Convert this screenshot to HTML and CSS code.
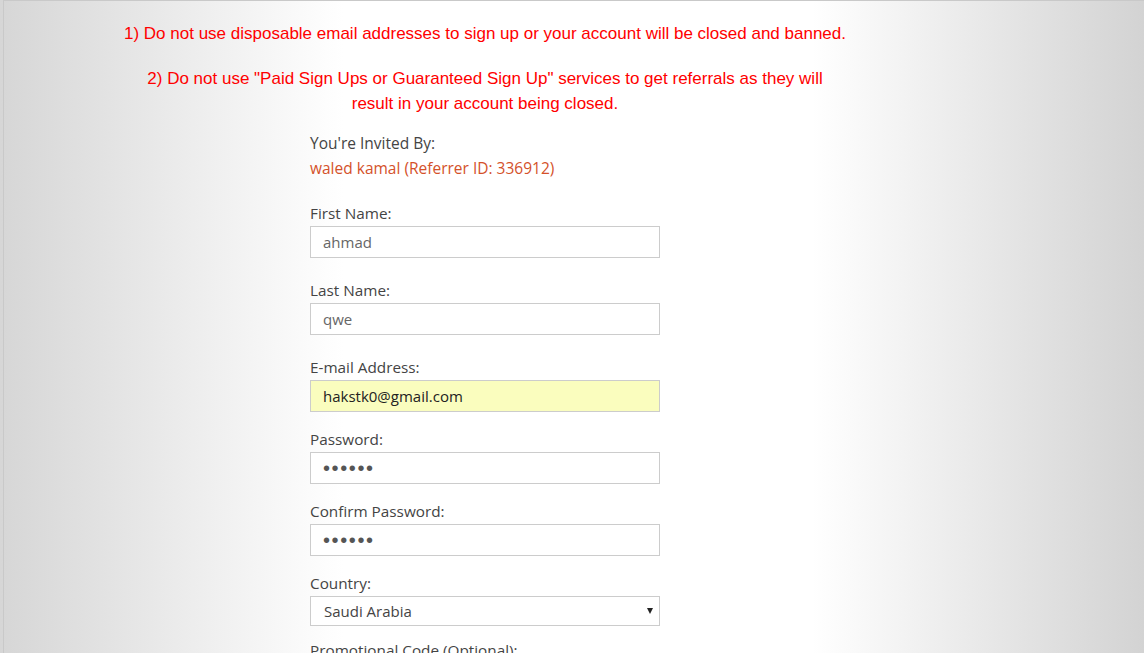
FILE: index.html
```html
<!DOCTYPE html>
<html lang="en">
<head>
<meta charset="utf-8">
<title>Sign Up</title>
<link rel="stylesheet" href="styles.css">
</head>
<body>
<div class="page">
  <div class="notices">
    <p class="notice notice-wide">1) Do not use disposable email addresses to sign up or your account will be closed and banned.</p>
    <p class="notice notice-narrow">2) Do not use "Paid Sign Ups or Guaranteed Sign Up" services to get referrals as they will result in your account being closed.</p>
  </div>
  <form class="signup">
    <div class="invited">
      <div class="invited-label">You're Invited By:</div>
      <div class="referrer">waled kamal (Referrer ID: 336912)</div>
    </div>
    <div class="field field-lg">
      <label class="label" for="fn">First Name:</label>
      <input class="input" id="fn" type="text" value="ahmad">
    </div>
    <div class="field field-lg">
      <label class="label" for="ln">Last Name:</label>
      <input class="input" id="ln" type="text" value="qwe">
    </div>
    <div class="field field-lg">
      <label class="label" for="em">E-mail Address:</label>
      <input class="input input-autofill" id="em" type="text" value="hakstk0@gmail.com">
    </div>
    <div class="field">
      <label class="label" for="pw">Password:</label>
      <input class="input input-pass" id="pw" type="password" value="aaaaaa">
    </div>
    <div class="field">
      <label class="label" for="cpw">Confirm Password:</label>
      <input class="input input-pass" id="cpw" type="password" value="aaaaaa">
    </div>
    <div class="field">
      <label class="label" for="ct">Country:</label>
      <div class="select-wrap">
        <select class="select" id="ct">
          <option>Saudi Arabia</option>
        </select>
      </div>
    </div>
    <div class="field field-sm">
      <label class="label" for="pc">Promotional Code (Optional):</label>
    </div>
  </form>
</div>
</body>
</html>
```

FILE: styles.css
```css
html, body {
  margin: 0;
  padding: 0;
  height: 100%;
  overflow: hidden;
}
body {
  background: linear-gradient(to right, #d6d6d6 0%, #ffffff 30%, #ffffff 71%, #d3d3d3 100%);
  font-family: "Open Sans", "Noto Sans", sans-serif;
}
.page {
  margin-left: 3px;
  border-left: 1px solid #c9c9c9;
  border-top: 1px solid #c9c9c9;
  min-height: 100%;
  box-sizing: border-box;
}
.notices {
  width: 962px;
  display: flex;
  flex-direction: column;
  align-items: center;
}
.notice {
  margin: 20px 0 0;
  color: #ff0000;
  font-family: "Liberation Sans", Arial, sans-serif;
  font-size: 17px;
  line-height: 25px;
  text-align: center;
}
.notice-narrow {
  width: 700px;
}
.signup {
  margin-left: 306px;
  width: 350px;
}
.invited {
  margin-top: 15px;
  font-size: 15.5px;
  line-height: 25px;
}
.invited-label {
  color: #444;
}
.referrer {
  color: #d4512a;
}
.field {
  margin-top: 16px;
}
.field-lg {
  margin-top: 21px;
}
.field-sm {
  margin-top: 13px;
}
.label {
  display: block;
  color: #444;
  font-size: 15.3px;
  line-height: 22px;
  margin-bottom: 2px;
}
.input, .select {
  display: block;
  box-sizing: border-box;
  width: 350px;
  height: 32px;
  margin: 0;
  border: 1px solid #cccccc;
  background: #ffffff;
  padding: 0 12px;
  font-family: "Open Sans", "Noto Sans", sans-serif;
  font-size: 15px;
  color: #666;
  outline: none;
}
.input-autofill {
  background: #fafdbe;
  color: #222;
}
.input-pass {
  color: #555;
  font-family: "Liberation Sans", Arial, sans-serif;
  font-size: 20px;
  letter-spacing: 1.6px;
}
.select-wrap {
  position: relative;
  width: 350px;
}
.select {
  height: 30px;
  padding: 0 13px;
  -webkit-appearance: none;
  appearance: none;
  color: #444;
  border-radius: 0;
}
.select-wrap::after {
  content: "";
  position: absolute;
  right: 7px;
  top: 12px;
  border-left: 3.5px solid transparent;
  border-right: 3.5px solid transparent;
  border-top: 6px solid #222;
  pointer-events: none;
}
```
